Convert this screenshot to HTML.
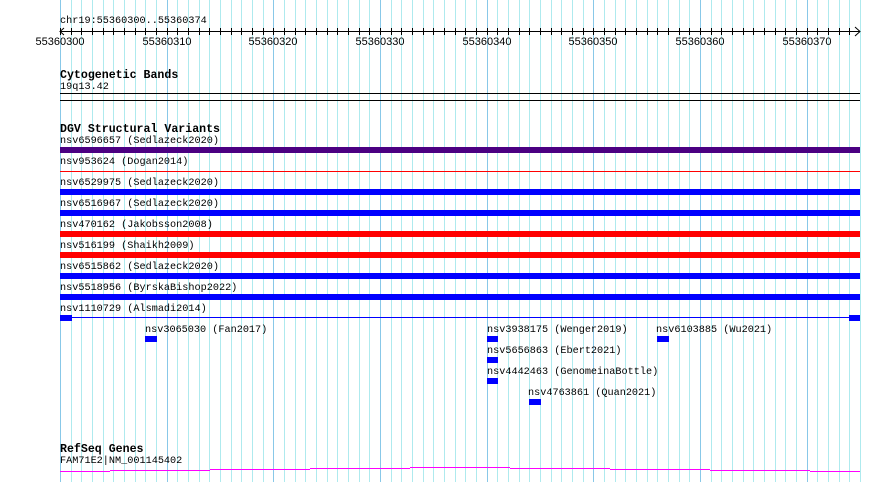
<!DOCTYPE html>
<html><head><meta charset="utf-8"><style>
html,body{margin:0;padding:0;background:#fff;}
#c{position:relative;width:890px;height:482px;overflow:hidden;background:#fff;}
svg{position:absolute;left:0;top:0;}
.t{position:absolute;font-family:"Liberation Mono",monospace;font-size:10.2px;line-height:12px;color:#000;white-space:pre;}
.b{position:absolute;font-family:"Liberation Mono",monospace;font-size:11.6px;font-weight:bold;line-height:13px;color:#000;white-space:pre;}
.r{position:absolute;font-family:"Liberation Sans",sans-serif;font-size:11px;line-height:12px;color:#000;white-space:pre;transform:translateX(-50%);}
</style></head><body><div id="c">
<svg width="890" height="482" shape-rendering="crispEdges">
<g id="grid"></g>
<line x1="60" y1="31.5" x2="860" y2="31.5" stroke="#000"/>
<polyline points="855,27 860,31.5 855,36" fill="none" stroke="#000" shape-rendering="auto"/>
<polyline points="64,28 60,31.5 64,35" fill="none" stroke="#000" shape-rendering="auto"/>
<g id="ticks" stroke="#000"></g>
<line x1="60" y1="93.5" x2="860" y2="93.5" stroke="#000"/>
<line x1="60" y1="100.5" x2="860" y2="100.5" stroke="#000"/>
<rect x="60" y="147" width="800" height="6" fill="#4b0082"/>
<line x1="60" y1="171.5" x2="860" y2="171.5" stroke="#ff0000"/>
<rect x="60" y="189" width="800" height="6" fill="#0000ff"/>
<rect x="60" y="210" width="800" height="6" fill="#0000ff"/>
<rect x="60" y="231" width="800" height="6" fill="#ff0000"/>
<rect x="60" y="252" width="800" height="6" fill="#ff0000"/>
<rect x="60" y="273" width="800" height="6" fill="#0000ff"/>
<rect x="60" y="294" width="800" height="6" fill="#0000ff"/>
<line x1="60" y1="317.5" x2="860" y2="317.5" stroke="#0000ff"/>
<rect x="60" y="315" width="12" height="6" fill="#0000ff"/>
<rect x="849" y="315" width="11" height="6" fill="#0000ff"/>
<rect x="145" y="336" width="12" height="6" fill="#0000ff"/>
<rect x="487" y="336" width="11" height="6" fill="#0000ff"/>
<rect x="657" y="336" width="12" height="6" fill="#0000ff"/>
<rect x="487" y="357" width="11" height="6" fill="#0000ff"/>
<rect x="487" y="378" width="11" height="6" fill="#0000ff"/>
<rect x="529" y="399" width="12" height="6" fill="#0000ff"/>
<g stroke="#ff00ff">
<line x1="60" y1="471.5" x2="110" y2="471.5"/>
<line x1="110" y1="470.5" x2="210" y2="470.5"/>
<line x1="210" y1="469.5" x2="310" y2="469.5"/>
<line x1="310" y1="468.5" x2="410" y2="468.5"/>
<line x1="410" y1="467.5" x2="510" y2="467.5"/>
<line x1="510" y1="468.5" x2="610" y2="468.5"/>
<line x1="610" y1="469.5" x2="710" y2="469.5"/>
<line x1="710" y1="470.5" x2="810" y2="470.5"/>
<line x1="810" y1="471.5" x2="860" y2="471.5"/>
</g>
</svg>
<script>
(function(){
var g=document.getElementById('grid'),t=document.getElementById('ticks'),s='',u='';
for(var k=0;k<=75;k++){var x=Math.round(60+k*800/75)+0.5;
s+='<line x1="'+x+'" y1="0" x2="'+x+'" y2="482" stroke="'+(k%10==0?'#88c8e8':'#aeeaee')+'"/>';
if(k<75)u+='<line x1="'+x+'" y1="28" x2="'+x+'" y2="35"/>';}
g.innerHTML=s;t.innerHTML=u;})();
</script>
<div class="t" style="left:60px;top:16px">chr19:55360300..55360374</div>
<div class="r" style="left:60px;top:36px">55360300</div>
<div class="r" style="left:167px;top:36px">55360310</div>
<div class="r" style="left:273px;top:36px">55360320</div>
<div class="r" style="left:380px;top:36px">55360330</div>
<div class="r" style="left:487px;top:36px">55360340</div>
<div class="r" style="left:593px;top:36px">55360350</div>
<div class="r" style="left:700px;top:36px">55360360</div>
<div class="r" style="left:807px;top:36px">55360370</div>
<div class="b" style="left:60px;top:69px">Cytogenetic Bands</div>
<div class="t" style="left:60px;top:82px">19q13.42</div>
<div class="b" style="left:60px;top:123px">DGV Structural Variants</div>
<div class="t" style="left:60px;top:136px">nsv6596657 (Sedlazeck2020)</div>
<div class="t" style="left:60px;top:157px">nsv953624 (Dogan2014)</div>
<div class="t" style="left:60px;top:178px">nsv6529975 (Sedlazeck2020)</div>
<div class="t" style="left:60px;top:199px">nsv6516967 (Sedlazeck2020)</div>
<div class="t" style="left:60px;top:220px">nsv470162 (Jakobsson2008)</div>
<div class="t" style="left:60px;top:241px">nsv516199 (Shaikh2009)</div>
<div class="t" style="left:60px;top:262px">nsv6515862 (Sedlazeck2020)</div>
<div class="t" style="left:60px;top:283px">nsv5518956 (ByrskaBishop2022)</div>
<div class="t" style="left:60px;top:304px">nsv1110729 (Alsmadi2014)</div>
<div class="t" style="left:145px;top:325px">nsv3065030 (Fan2017)</div>
<div class="t" style="left:487px;top:325px">nsv3938175 (Wenger2019)</div>
<div class="t" style="left:656px;top:325px">nsv6103885 (Wu2021)</div>
<div class="t" style="left:487px;top:346px">nsv5656863 (Ebert2021)</div>
<div class="t" style="left:487px;top:367px">nsv4442463 (GenomeinaBottle)</div>
<div class="t" style="left:528px;top:388px">nsv4763861 (Quan2021)</div>
<div class="b" style="left:60px;top:443px">RefSeq Genes</div>
<div class="t" style="left:60px;top:456px">FAM71E2|NM_001145402</div>
</div></body></html>
